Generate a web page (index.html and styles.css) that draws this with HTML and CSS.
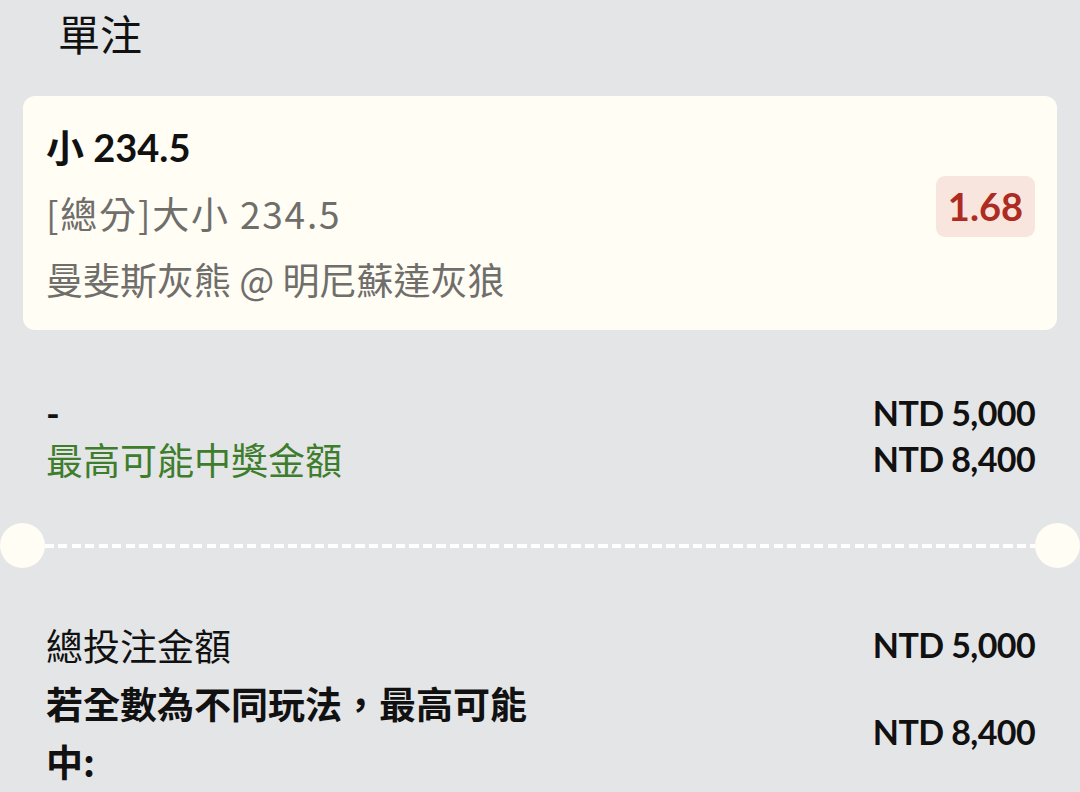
FILE: index.html
```html
<!DOCTYPE html>
<html lang="zh-Hant">
<head>
<meta charset="utf-8">
<link rel="stylesheet" href="styles.css">
</head>
<body>
<div class="page">
  <div class="header">單注</div>
  <div class="card">
    <div class="card-info">
      <div class="pick">小 234.5</div>
      <div class="market">[總分]大小 234.5</div>
      <div class="match">曼斐斯灰熊 @ 明尼蘇達灰狼</div>
    </div>
    <div class="odds">1.68</div>
  </div>
  <div class="stake">
    <div class="stake-left">
      <div class="dash">-</div>
      <div class="win-label">最高可能中獎金額</div>
    </div>
    <div class="stake-right">
      <div class="amt">NTD 5,000</div>
      <div class="amt">NTD 8,400</div>
    </div>
  </div>
  <div class="divider">
    <span class="notch"></span>
    <span class="dashes"></span>
    <span class="notch"></span>
  </div>
  <div class="summary">
    <div class="sum-row">
      <div class="sum-label">總投注金額</div>
      <div class="amt">NTD 5,000</div>
    </div>
    <div class="sum-row second">
      <div class="sum-label bold">若全數為不同玩法，最高可能中:</div>
      <div class="amt">NTD 8,400</div>
    </div>
  </div>
</div>
</body>
</html>
```
FILE: styles.css
```css
html, body {
  margin: 0;
  padding: 0;
  background: #e4e5e7;
}
body {
  font-family: Lato, "Noto Sans CJK TC", sans-serif;
  color: #111;
  width: 1080px;
  height: 792px;
  overflow: hidden;
}
.header {
  font-family: "Noto Sans CJK TC", sans-serif;
  font-size: 42px;
  line-height: 66px;
  padding-left: 58px;
  color: #111;
}
.card {
  margin: 30px 23px 0 23px;
  background: #fffdf4;
  border-radius: 12px;
  display: flex;
  align-items: center;
  justify-content: space-between;
  padding: 18px 22px 18px 23px;
}
.card-info {
  display: flex;
  flex-direction: column;
}
.pick {
  font-size: 38px;
  font-weight: 700;
  line-height: 66px;
  color: #111;
}
.market, .match {
  font-family: "Noto Sans CJK TC", sans-serif;
  font-size: 37px;
  line-height: 66px;
  color: #6f6e6b;
}
.market {
  letter-spacing: 1.8px;
}
.odds {
  background: #f8e5de;
  color: #ae2b21;
  font-weight: 700;
  font-size: 38px;
  line-height: 61px;
  padding: 0 12px;
  border-radius: 9px;
  margin-top: -14px;
}
.stake {
  display: flex;
  justify-content: space-between;
  padding: 0 45px 0 46px;
  margin-top: 60px;
}
.stake-left, .stake-right {
  display: flex;
  flex-direction: column;
}
.stake-right {
  align-items: flex-end;
}
.dash, .win-label, .stake-right .amt {
  line-height: 46px;
}
.dash {
  font-size: 37px;
  font-weight: 700;
}
.win-label {
  font-family: "Noto Sans CJK TC", sans-serif;
  font-size: 37px;
  color: #3d7d2c;
}
.amt {
  font-size: 34px;
  font-weight: 700;
  letter-spacing: -0.6px;
  color: #111;
}
.divider {
  display: flex;
  align-items: center;
  margin-top: 41px;
}
.notch {
  width: 45px;
  height: 45px;
  border-radius: 50%;
  background: #fffdf4;
  flex: none;
}
.dashes {
  flex: 1;
  height: 4px;
  background: repeating-linear-gradient(to right, #ffffff 0 9px, transparent 9px 13.5px);
}
.summary {
  padding: 0 45px 0 46px;
  margin-top: 49px;
}
.sum-row {
  display: flex;
  justify-content: space-between;
  align-items: center;
}
.sum-row.second {
  margin-top: 1px;
}
.sum-label {
  font-family: "Noto Sans CJK TC", sans-serif;
  font-size: 37px;
  line-height: 56px;
  max-width: 500px;
}
.sum-label.bold {
  font-weight: 700;
  line-height: 58px;
}
.sum-row .amt {
  line-height: 56px;
}
```
